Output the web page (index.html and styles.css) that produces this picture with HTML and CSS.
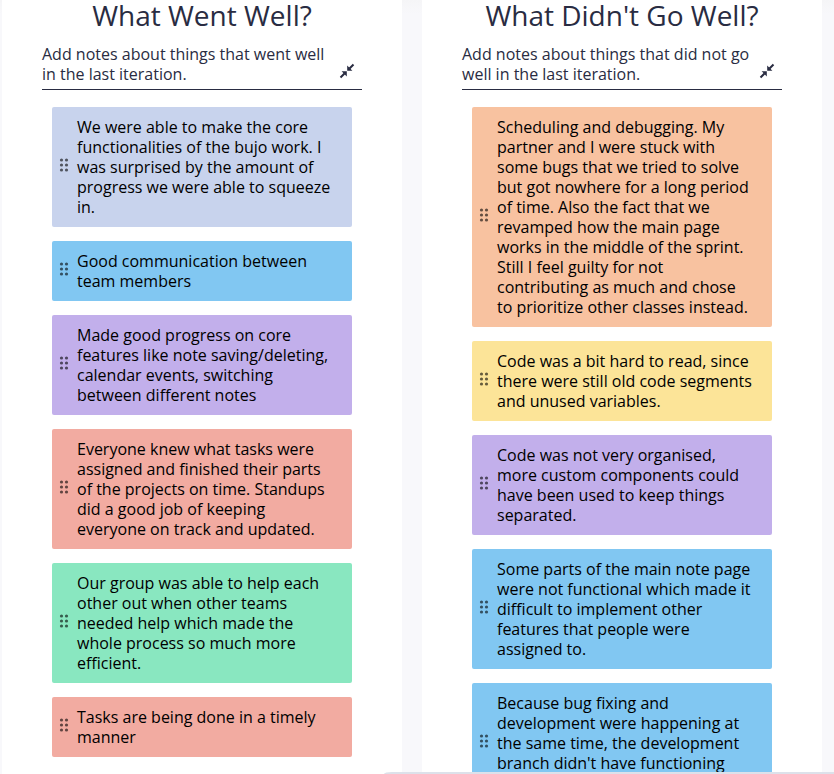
FILE: index.html
```html
<!DOCTYPE html>
<html lang="en">
<head>
<meta charset="utf-8">
<title>Retrospective</title>
<link rel="stylesheet" href="styles.css">
</head>
<body>
<svg class="defs" aria-hidden="true">
  <symbol id="grip" viewBox="0 0 10 16"><circle cx="2.500" cy="3" r="1.600"/><circle cx="7.500" cy="3" r="1.600"/><circle cx="2.500" cy="8" r="1.600"/><circle cx="7.500" cy="8" r="1.600"/><circle cx="2.500" cy="13" r="1.600"/><circle cx="7.500" cy="13" r="1.600"/></symbol>
  <symbol id="collapse" viewBox="0 0 16 16"><path d="M14.500 1.500 10.500 5.500M1.500 14.500l4-4" fill="none" stroke="#292c42" stroke-width="2"/><path d="M8.200 2.600V7.800h5.200zM7.800 13.400V8.200H2.600z"/></symbol>
</svg>
<main class="board">
  <section class="column">
    <h2>What Went Well?</h2>
    <header><p>Add notes about things that went well in the last iteration.</p><button type="button" aria-label="Collapse notes"><svg><use href="#collapse"/></svg></button></header>
    <ul>
      <li class="periwinkle"><svg><use href="#grip"/></svg><p>We were able to make the core functionalities of the bujo work. I was surprised by the amount of progress we were able to squeeze in.</p></li>
      <li class="blue"><svg><use href="#grip"/></svg><p>Good communication between team members</p></li>
      <li class="purple"><svg><use href="#grip"/></svg><p>Made good progress on core features like note saving/deleting, calendar events, switching between different notes</p></li>
      <li class="red"><svg><use href="#grip"/></svg><p>Everyone knew what tasks were assigned and finished their parts of the projects on time. Standups did a good job of keeping everyone on track and updated.</p></li>
      <li class="green"><svg><use href="#grip"/></svg><p>Our group was able to help each other out when other teams needed help which made the whole process so much more efficient.</p></li>
      <li class="red"><svg><use href="#grip"/></svg><p>Tasks are being done in a timely manner</p></li>
    </ul>
  </section>
  <section class="column">
    <h2>What Didn't Go Well?</h2>
    <header><p>Add notes about things that did not go well in the last iteration.</p><button type="button" aria-label="Collapse notes"><svg><use href="#collapse"/></svg></button></header>
    <ul>
      <li class="orange"><svg><use href="#grip"/></svg><p>Scheduling and debugging. My partner and I were stuck with some bugs that we tried to solve but got nowhere for a long period of time. Also the fact that we revamped how the main page works in the middle of the sprint. Still I feel guilty for not contributing as much and chose to prioritize other classes instead.</p></li>
      <li class="yellow"><svg><use href="#grip"/></svg><p>Code was a bit hard to read, since there were still old code segments and unused variables.</p></li>
      <li class="purple"><svg><use href="#grip"/></svg><p>Code was not very organised, more custom components could have been used to keep things separated.</p></li>
      <li class="blue"><svg><use href="#grip"/></svg><p>Some parts of the main note page were not functional which made it difficult to implement other features that people were assigned to.</p></li>
      <li class="blue continued"><svg><use href="#grip"/></svg><p>Because bug fixing and development were happening at the same time, the development branch didn't have functioning</p></li>
    </ul>
  </section>
</main>
<div class="dock"></div>
</body>
</html>
```

FILE: styles.css
```css
* { box-sizing: border-box; margin: 0; padding: 0; }
body { height: 100vh; overflow: hidden; background: linear-gradient(#f5f5f7, #f8f8fb 14px); color: #000; font: 16px/20px "Open Sans", sans-serif; }
.defs { display: none; }
.board { display: grid; grid-template-columns: 1fr 1fr; gap: 20px; height: 100vh; padding: 0 12px 0 2px; }
.column { padding: 0 40px; background: #fff; }
h2 { height: 44px; color: #292c42; font-size: 28px; font-weight: 400; line-height: 30px; text-align: center; white-space: nowrap; }
header { display: flex; justify-content: space-between; align-items: flex-end; height: 46px; padding-bottom: 5px; border-bottom: 1px solid #292c42; color: #292c42; }
header p { flex: 1; }
button { display: grid; place-items: center; width: 30px; height: 26px; border: 0; background: none; }
button svg { width: 16px; height: 16px; fill: #292c42; }
ul { display: grid; gap: 14px; padding: 17px 10px; list-style: none; }
li { display: flex; align-items: center; gap: 8px; padding: 10px 20px 10px 7px; border-radius: 2px; }
li svg { flex: none; width: 10px; height: 16px; margin-bottom: 4px; fill: rgba(0, 0, 0, .6); }
li p { flex: 1; }
/* leaves room for one more line of text below the fold */
.continued p { padding-bottom: 20px; }
.periwinkle { background: #c8d3ed; }
.blue { background: #81c7f2; }
.purple { background: #c2afeb; }
.red { background: #f2aba1; }
.green { background: #89e7c0; }
.orange { background: #f8c2a0; }
.yellow { background: #fce498; }
.dock { position: fixed; right: 0; bottom: 0; left: 46%; height: 2px; border-top-left-radius: 8px 2px; background: #dde1ea; }
```
